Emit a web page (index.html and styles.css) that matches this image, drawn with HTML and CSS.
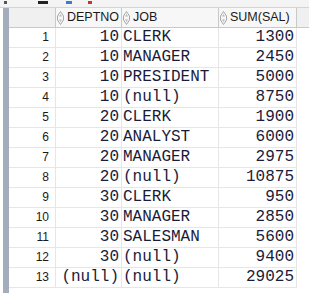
FILE: index.html
```html
<!DOCTYPE html>
<html lang="en">
<head>
    <meta charset="UTF-8">
    <title>Query Result</title>
    <link rel="stylesheet" href="styles.css">
</head>
<body>
    <div class="toolbar">
        <span class="tb tb-pin"></span>
        <span class="tb tb-save"></span>
        <span class="tb tb-sql"></span>
        <span class="tb tb-del"></span>
    </div>

    <div class="main">
        <div class="gutter"></div>
        <div class="grid">
            <div class="row head">
                <div class="cell num"></div>
                <div class="cell hd"><svg class="sort" viewBox="0 0 7 14"><path d="M3.5 0.5 L6.5 5 L6.5 9 L3.5 13.5 L0.5 9 L0.5 5 Z" fill="none" stroke="#a8a8a8"/><path d="M3.5 3 L5 5.5 L2 5.5 Z M3.5 11 L5 8.5 L2 8.5 Z" fill="#b8b8b8"/></svg>DEPTNO</div>
                <div class="cell hd"><svg class="sort" viewBox="0 0 7 14"><path d="M3.5 0.5 L6.5 5 L6.5 9 L3.5 13.5 L0.5 9 L0.5 5 Z" fill="none" stroke="#a8a8a8"/><path d="M3.5 3 L5 5.5 L2 5.5 Z M3.5 11 L5 8.5 L2 8.5 Z" fill="#b8b8b8"/></svg>JOB</div>
                <div class="cell hd"><svg class="sort" viewBox="0 0 7 14"><path d="M3.5 0.5 L6.5 5 L6.5 9 L3.5 13.5 L0.5 9 L0.5 5 Z" fill="none" stroke="#a8a8a8"/><path d="M3.5 3 L5 5.5 L2 5.5 Z M3.5 11 L5 8.5 L2 8.5 Z" fill="#b8b8b8"/></svg>SUM(SAL)</div>
                <div class="cell"></div>
            </div>
            <div class="row"><div class="cell num">1</div><div class="cell val r">10</div><div class="cell val">CLERK</div><div class="cell val r">1300</div></div>
            <div class="row"><div class="cell num">2</div><div class="cell val r">10</div><div class="cell val">MANAGER</div><div class="cell val r">2450</div></div>
            <div class="row"><div class="cell num">3</div><div class="cell val r">10</div><div class="cell val">PRESIDENT</div><div class="cell val r">5000</div></div>
            <div class="row"><div class="cell num">4</div><div class="cell val r">10</div><div class="cell val">(null)</div><div class="cell val r">8750</div></div>
            <div class="row"><div class="cell num">5</div><div class="cell val r">20</div><div class="cell val">CLERK</div><div class="cell val r">1900</div></div>
            <div class="row"><div class="cell num">6</div><div class="cell val r">20</div><div class="cell val">ANALYST</div><div class="cell val r">6000</div></div>
            <div class="row"><div class="cell num">7</div><div class="cell val r">20</div><div class="cell val">MANAGER</div><div class="cell val r">2975</div></div>
            <div class="row"><div class="cell num">8</div><div class="cell val r">20</div><div class="cell val">(null)</div><div class="cell val r">10875</div></div>
            <div class="row"><div class="cell num">9</div><div class="cell val r">30</div><div class="cell val">CLERK</div><div class="cell val r">950</div></div>
            <div class="row"><div class="cell num">10</div><div class="cell val r">30</div><div class="cell val">MANAGER</div><div class="cell val r">2850</div></div>
            <div class="row"><div class="cell num">11</div><div class="cell val r">30</div><div class="cell val">SALESMAN</div><div class="cell val r">5600</div></div>
            <div class="row"><div class="cell num">12</div><div class="cell val r">30</div><div class="cell val">(null)</div><div class="cell val r">9400</div></div>
            <div class="row"><div class="cell num">13</div><div class="cell val r">(null)</div><div class="cell val">(null)</div><div class="cell val r">29025</div></div>
        </div>
    </div>
</body>
</html>
```

FILE: styles.css
```css
* { margin: 0; padding: 0; box-sizing: border-box; }
body {
    background: #fff; width: 309px; height: 293px; overflow: hidden;
    font-family: "Liberation Sans", Arial, sans-serif;
}
.toolbar {
    height: 8px; background: #f4f4f4; border-bottom: 1px solid #d4d4d4;
    position: relative; overflow: hidden;
}
.tb { position: absolute; bottom: 3px; height: 3px; }
.tb-pin { left: 4px; width: 3px; background: #555; }
.tb-save { left: 38px; width: 10px; background: #222; }
.tb-sql { left: 66px; width: 6px; background: #3a7bd5; }
.tb-del { left: 88px; width: 4px; background: #c0392b; }
.main { display: flex; height: 285px; }
.gutter { width: 6px; margin-left: 3px; background: #a3adbb; }
.grid { width: 300px; }
.row {
    display: grid; grid-template-columns: 47px 66px 97px 78px;
    height: 20px; border-bottom: 1px solid #e6e6e6; width: 288px;
}
.cell {
    border-right: 1px solid #e6e6e6; line-height: 19px;
    white-space: nowrap; overflow: hidden;
}
.head {
    background: #f0f0f0; border-bottom: 1px solid #c9c9c9;
    width: 300px; grid-template-columns: 47px 66px 97px 78px 12px;
}
.head .cell { border-right: 1px solid #c9c9c9; }
.head .cell:last-child { border-right: none; }
.hd {
    font-size: 12.5px; color: #1a1a1a; background: #f7f7f7;
    display: flex; align-items: center; gap: 3px; padding-left: 1px;
}
.sort { width: 7px; height: 14px; flex: none; }
.num { font-size: 12px; color: #1a1a1a; text-align: right; padding-right: 6px; }
.val {
    font-family: "Liberation Mono", "Courier New", monospace;
    font-size: 16px; color: #1b1b3a; padding: 0 2px 0 1px;
}
.r { text-align: right; }
```
